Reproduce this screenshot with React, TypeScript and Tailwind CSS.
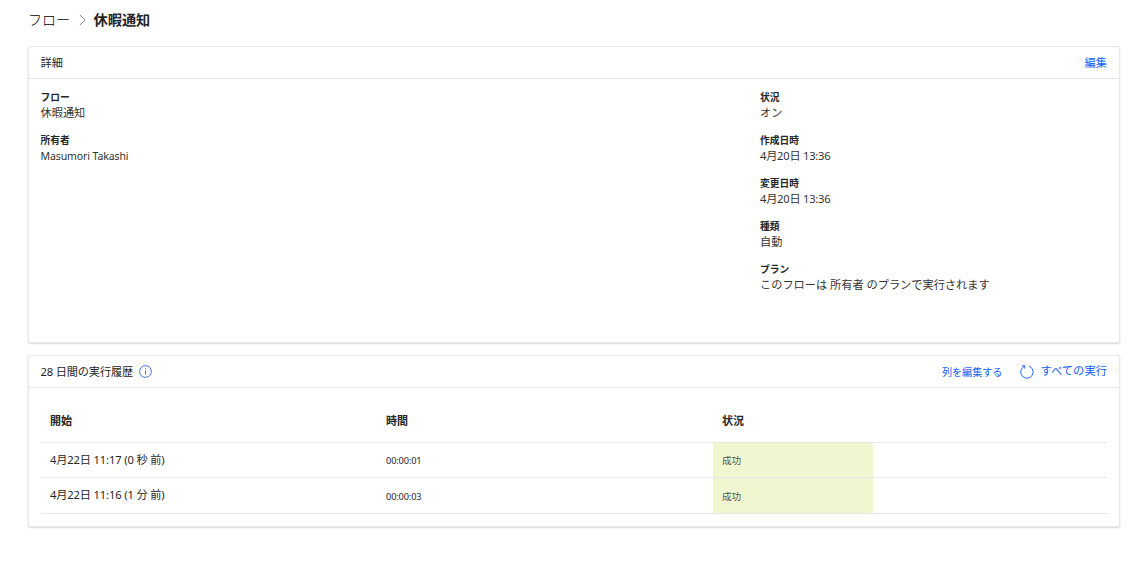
import type { ReactNode } from 'react';

type Field = { label: string; value: ReactNode };

const leftFields: Field[] = [
  { label: 'フロー', value: '休暇通知' },
  { label: '所有者', value: <span className="text-[10.5px] tracking-[-0.1px]">Masumori Takashi</span> },
];

const rightFields: Field[] = [
  { label: '状況', value: 'オン' },
  { label: '作成日時', value: <span className="tracking-[-0.24px]">4月20日 13:36</span> },
  { label: '変更日時', value: <span className="tracking-[-0.24px]">4月20日 13:36</span> },
  { label: '種類', value: '自動' },
  { label: 'プラン', value: 'このフローは 所有者 のプランで実行されます' },
];

const runs = [
  { start: '4月22日 11:17 (0 秒 前)', duration: '00:00:01', status: '成功', height: 'h-[35px]' },
  { start: '4月22日 11:16 (1 分 前)', duration: '00:00:03', status: '成功', height: 'h-9' },
];

function Fields({ items }: { items: Field[] }) {
  return (
    <dl className="flex flex-col gap-3">
      {items.map((f) => (
        <div key={f.label}>
          <dt className="pt-px text-[9.75px] leading-4 font-bold">{f.label}</dt>
          <dd className="text-[11.2px] leading-[14px] text-[#333]">{f.value}</dd>
        </div>
      ))}
    </dl>
  );
}

function Card({ height, title, actions, children }: { height: string; title: ReactNode; actions: ReactNode; children: ReactNode }) {
  return (
    <section className={`${height} rounded-[2px] border border-[#e8e8e8] bg-white shadow-[0_1px_2px_rgba(0,0,0,0.16)]`}>
      <header className="flex h-8 items-center justify-between border-b border-[#e8e8e8] pr-3 pl-[11.5px] text-[11.2px]">
        {title}
        {actions}
      </header>
      {children}
    </section>
  );
}

function InfoIcon() {
  return (
    <svg className="ml-1.5 size-[13px]" viewBox="0 0 13 13" fill="none" stroke="#2f66f5">
      <circle cx="6.5" cy="6.5" r="5.9" strokeWidth="0.9" />
      <path d="M6.5 5.5v4M6.5 3.2v1.1" strokeWidth="0.9" />
    </svg>
  );
}

function RefreshIcon() {
  return (
    <svg className="mr-1.5 size-[14px]" viewBox="0 0 14 14" fill="none" stroke="#1f69ff">
      <path d="M9 1.1A6.2 6.2 0 1 1 4.6 1.2" />
      <path d="M2 0.8h2.8v2.8" />
    </svg>
  );
}

export default function App() {
  return (
    <main className="h-[577px] w-[1131px] bg-white pr-[11px] pl-7 font-['Noto_Sans','Noto_Sans_CJK_JP',sans-serif] text-[#262626]">
      <nav className="flex h-[46px] items-center pb-[6px] text-[14px] leading-5">
        <span className="font-light text-black">フロー</span>
        <svg className="mx-[9px] h-3 w-[7px]" viewBox="0 0 7 12" fill="none" stroke="#777" strokeWidth="0.9">
          <path d="M0.8 1 6.2 6 0.8 11" />
        </svg>
        <span className="-ml-[1.5px] text-[14.2px] font-bold">休暇通知</span>
      </nav>

      <Card
        height="h-[297px]"
        title={<h2 className="pt-0.5">詳細</h2>}
        actions={<button className="pt-0.5 text-[#0f62fe]">編集</button>}
      >
        <div className="flex pt-[10px] pr-3 pl-[11.5px]">
          <div className="w-[719.5px]">
            <Fields items={leftFields} />
          </div>
          <Fields items={rightFields} />
        </div>
      </Card>

      <div className="h-3" />

      <Card
        height="h-[172px]"
        title={
          <h2 className="flex items-center">
            <span className="pt-0.5 tracking-[-0.15px]">28 日間の実行履歴</span>
            <InfoIcon />
          </h2>
        }
        actions={
          <div className="flex items-center text-[#0f62fe]">
            <button className="mr-[18px] pt-0.5 text-[10.1px]">列を編集する</button>
            <RefreshIcon />
            <button className="pb-px text-[11.3px]">すべての実行</button>
          </div>
        }
      >
        <div className="px-3">
          <div className="flex h-[55px] items-center border-b border-[#e8e8e8] pt-[13px] text-[11px] font-bold">
            <span className="w-[336px] pl-[9px]">開始</span>
            <span className="w-[336px] pl-[9px]">時間</span>
            <span className="pl-[9px]">状況</span>
          </div>
          {runs.map((r) => (
            <div key={r.start} className={`${r.height} flex border-b border-[#e8e8e8]`}>
              <span className="flex w-[336px] items-center pl-[9px] text-[11.2px] tracking-[-0.15px]">{r.start}</span>
              <span className="flex w-[336px] items-center pt-0.5 pl-[9px] text-[9.2px] tracking-[-0.12px]">{r.duration}</span>
              <span className="flex w-40 items-center bg-[#f0f6cf] pt-[3px] pl-[9px] text-[9.6px] text-[#555]">{r.status}</span>
            </div>
          ))}
        </div>
      </Card>
    </main>
  );
}
